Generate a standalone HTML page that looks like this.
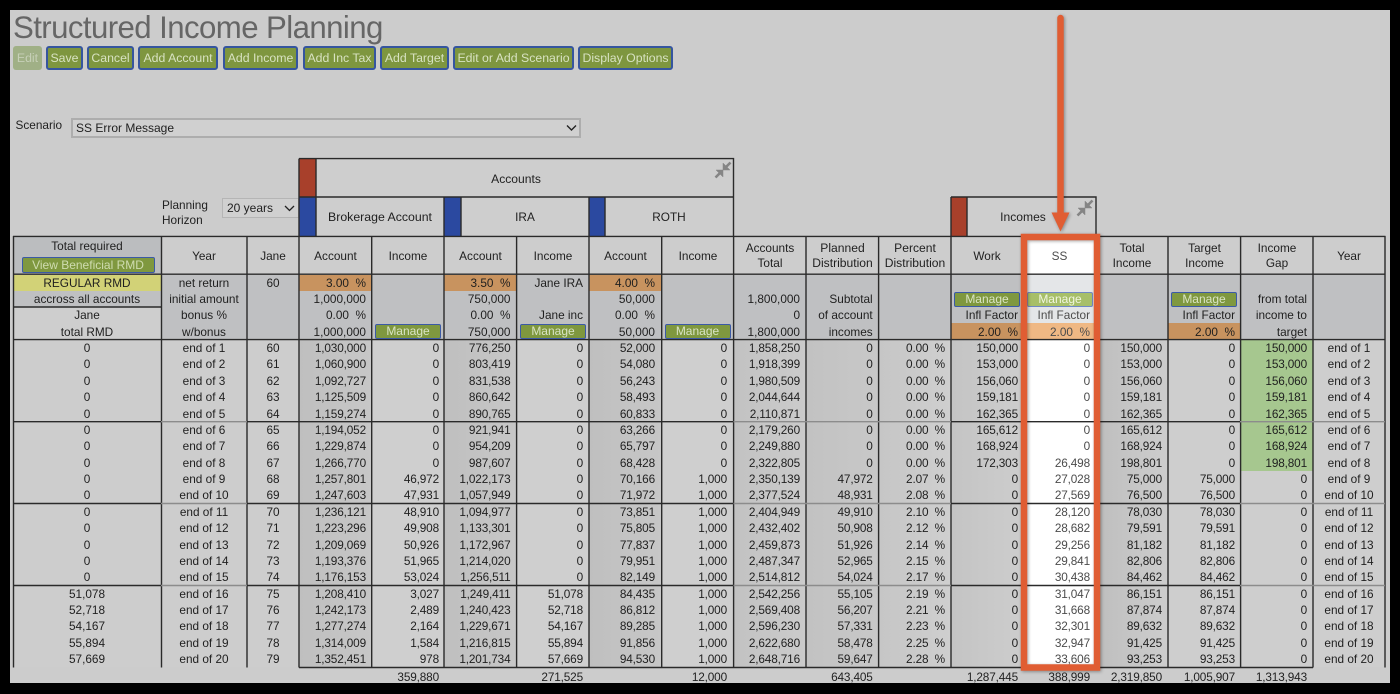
<!DOCTYPE html>
<html><head><meta charset="utf-8"><title>Structured Income Planning</title>
<style>
html,body{margin:0;padding:0;background:#000;}
#p{position:relative;width:1400px;height:694px;overflow:hidden;background:#000;font-family:"Liberation Sans",sans-serif;font-size:11.8px;color:#1f1f1f;}
#g{position:absolute;left:10px;top:10px;width:1379.5px;height:673px;background:#cccccc;}
#p div{position:absolute;}
.b{background:#7e963f;border:2px solid #35559f;border-radius:3px;box-sizing:border-box;height:24px;top:46px;color:#d8e2c2;font-size:12.3px;line-height:20px;text-align:center;white-space:nowrap;}
.m{background:#7f983f;border:1.5px solid #3b5aa6;border-radius:2px;box-sizing:border-box;height:15px;color:#d9e4c4;font-size:12px;line-height:13px;text-align:center;white-space:nowrap;}
.l{white-space:pre;line-height:16.37px;text-align:right;}
.h{white-space:pre;line-height:16.37px;text-align:center;}
.r{top:340px;}.s{top:274.5px;}
.l.r,.u{letter-spacing:-.15px;}
.c1{left:299px;width:67px}.c2{left:372px;width:67px}.c3{left:444px;width:66.5px}.c4{left:517px;width:66px}.c5{left:589px;width:66px}.c6{left:662px;width:65px}.c7{left:734px;width:66px}.c8{left:806px;width:66.7px}.c9{left:879px;width:66px}.c10{left:951px;width:67px}.c11{left:1027px;width:63px;color:#4c4c4c}.c12{left:1096px;width:66px}.c13{left:1168px;width:67px}.c14{left:1241px;width:66px}
.y{left:161px;width:86px}.j{left:247px;width:52px}.q{left:13px;width:148px}.y2{left:1313px;width:72px}
.u{top:668.5px;line-height:16px;white-space:nowrap;text-align:right;}
</style></head><body>
<div id="p">
<div id="g"></div>

<!-- title + toolbar -->
<div style="left:13px;top:9px;font-size:31.2px;letter-spacing:-.58px;line-height:38px;color:#666;white-space:nowrap;">Structured Income Planning</div>
<div class="b" style="left:13px;width:29px;background:#a0b086;border:0;border-radius:3px;color:#c7d0b8;line-height:24px;">Edit</div>
<div class="b" style="left:46px;width:37px;">Save</div>
<div class="b" style="left:87px;width:47px;">Cancel</div>
<div class="b" style="left:138px;width:80px;">Add Account</div>
<div class="b" style="left:223px;width:75px;">Add Income</div>
<div class="b" style="left:303px;width:73px;">Add Inc Tax</div>
<div class="b" style="left:380px;width:69px;">Add Target</div>
<div class="b" style="left:453px;width:121px;">Edit or Add Scenario</div>
<div class="b" style="left:578px;width:95px;">Display Options</div>

<!-- scenario -->
<div style="left:15.5px;top:117px;line-height:16px;">Scenario</div>
<div style="left:71px;top:118px;width:510px;height:20px;box-sizing:border-box;border:2px solid #adadad;background:#d0d0d0;"></div>
<div style="left:76px;top:120px;line-height:16px;font-size:12px;">SS Error Message</div>
<svg style="position:absolute;left:566px;top:124px" width="12" height="8"><path d="M1 1.5L5.5 6L10 1.5" fill="none" stroke="#222" stroke-width="1.4"/></svg>

<!-- planning horizon -->
<div style="left:162px;top:198px;line-height:14.5px;">Planning<br>Horizon</div>
<div style="left:222px;top:198px;width:77px;height:20px;box-sizing:border-box;border:1px solid #b5b5b5;background:#d0d0d0;"></div>
<div style="left:227px;top:200px;line-height:16px;font-size:12px;">20 years</div>
<svg style="position:absolute;left:284px;top:205px" width="12" height="8"><path d="M1 1L5.5 5.5L10 1" fill="none" stroke="#222" stroke-width="1.3"/></svg>

<!-- column header blocks -->
<div style="left:316px;top:159px;width:417px;height:38px;background:#cecece;"></div>
<div style="left:316px;top:197px;width:417px;height:39px;background:#cecece;"></div>
<div style="left:967px;top:197px;width:129px;height:39px;background:#cecece;"></div>
<div style="left:299px;top:159px;width:17px;height:38px;background:#a8402b;"></div>
<div style="left:299px;top:197px;width:17px;height:39px;background:#2b49a0;"></div>
<div style="left:444px;top:197px;width:17px;height:39px;background:#2b49a0;"></div>
<div style="left:589px;top:197px;width:16px;height:39px;background:#2b49a0;"></div>
<div style="left:951px;top:197px;width:16px;height:39px;background:#a8402b;"></div>
<div class="h" style="left:316px;width:400px;top:171px;font-size:12.1px;">Accounts</div>
<div class="h" style="left:316px;width:128px;top:209px;font-size:12.3px;">Brokerage Account</div>
<div class="h" style="left:461px;width:128px;top:209px;">IRA</div>
<div class="h" style="left:605px;width:128px;top:209px;">ROTH</div>
<div class="h" style="left:967px;width:112px;top:209px;font-size:12.1px;">Incomes</div>

<!-- table header backgrounds -->
<div style="left:13px;top:236px;width:148px;height:38px;background:#bbbdbf;"></div>
<div style="left:161px;top:236px;width:1224px;height:38px;background:#cdcdcd;"></div>
<div style="left:13px;top:274.5px;width:148px;height:16px;background:#d2d277;"></div>
<div style="left:13px;top:290.5px;width:148px;height:17px;background:#bfc0c2;"></div>
<div style="left:13px;top:307px;width:148px;height:32px;background:#cecece;"></div>
<div style="left:161px;top:274.5px;width:1224px;height:65px;background:#bfc0c2;"></div>
<div style="left:299px;top:275px;width:73px;height:16px;background:#c8935f;"></div>
<div style="left:444px;top:275px;width:73px;height:16px;background:#c8935f;"></div>
<div style="left:589px;top:275px;width:73px;height:16px;background:#c8935f;"></div>
<div style="left:951px;top:323px;width:70px;height:16px;background:#c8935f;"></div>
<div style="left:1168px;top:323px;width:73px;height:16px;background:#c8935f;"></div>

<!-- body shading -->
<div style="left:13px;top:340px;width:286px;height:327px;background:#cdcdcd;"></div>
<div style="left:299px;top:340px;width:73px;height:327px;background:linear-gradient(to right,#bfbfbf,#c7c7c7);"></div>
<div style="left:372px;top:340px;width:72px;height:327px;background:#cfcfcf;"></div>
<div style="left:444px;top:340px;width:73px;height:327px;background:linear-gradient(to right,#bfbfbf,#c7c7c7);"></div>
<div style="left:517px;top:340px;width:72px;height:327px;background:#cfcfcf;"></div>
<div style="left:589px;top:340px;width:73px;height:327px;background:linear-gradient(to right,#bfbfbf,#c7c7c7);"></div>
<div style="left:662px;top:340px;width:72px;height:327px;background:#cfcfcf;"></div>
<div style="left:734px;top:340px;width:72px;height:327px;background:linear-gradient(to right,#c2c2c2,#cbcbcb);"></div>
<div style="left:806px;top:340px;width:73px;height:327px;background:linear-gradient(to right,#c2c2c2,#c8c8c8);"></div>
<div style="left:879px;top:340px;width:72px;height:327px;background:linear-gradient(to right,#c6c6c6,#cfcfcf);"></div>
<div style="left:951px;top:340px;width:72px;height:327px;background:linear-gradient(to right,#c4c4c4,#cdcdcd);"></div>
<div style="left:1096px;top:340px;width:72px;height:327px;background:linear-gradient(to right,#bebebe,#cdcdcd);"></div>
<div style="left:1168px;top:340px;width:145px;height:327px;background:#cecece;"></div>
<div style="left:1241px;top:340px;width:72px;height:131px;background:#a6c78f;"></div>
<div style="left:1313px;top:340px;width:72px;height:327px;background:#cecece;"></div>

<!-- SS column -->
<div style="left:1023px;top:236px;width:73px;height:431px;background:#fff;"></div>
<div style="left:1023px;top:275px;width:73px;height:48px;background:#e4e6e8;"></div>
<div style="left:1023px;top:323px;width:73px;height:16px;background:#efb884;"></div>

<!-- grid lines -->
<svg style="position:absolute;left:0;top:0" width="1400" height="694">
<g stroke="#2a2a2a" stroke-width="1.4" fill="none">
<path d="M299 158.6H733.5V236M299 158.6V236M299 197H733.5M316 158.6V236M444 197V236M461 197V236M589 197V236M605 197V236"/>
<path d="M951 197H1096V236M951 197V236M967 197V236"/>
<path d="M13 236.4H1385.5M13 274.2H1385.5M13 339.6H1385.5M13 307H161"/>
<path d="M13.5 236V667.5M161.5 236V667.5M247 236V667.5M299 236V667.5M371.7 236V667.5M444 236V667.5M516.6 236V667.5M589 236V667.5M661.7 236V667.5M733.6 236V667.5M806 236V667.5M878.6 236V667.5M951 236V667.5M1023 236V667.5M1096 236V667.5M1168 236V667.5M1240.6 236V667.5M1313 236V667.5M1385 236V667.5"/>
<path d="M299 667.5H1313"/>
<path d="M13 421.7H161M247 421.7H733.5M951 421.7H1240M13 503.5H161M247 503.5H733.5M951 503.5H1240M13 585.5H161M247 585.5H733.5M951 585.5H1240"/>
</g>
<path d="M161 421.7H247M733.5 421.7H951M1240 421.7H1385M161 503.5H247M733.5 503.5H951M1240 503.5H1385M161 585.5H247M733.5 585.5H951M1240 585.5H1385" stroke="#8c8c8c" stroke-width="1.4" fill="none"/>
<g fill="#858585" stroke="#858585">
<path d="M715.5 177.5L721 172M730.5 162.5L725 168" stroke-width="2.6" fill="none"/>
<path d="M723 170L716 170L723 177ZM723 170L730 170L723 163Z" stroke-width=".5"/>
<path d="M1077.5 215.5L1083 210M1092.5 200.5L1087 206" stroke-width="2.6" fill="none"/>
<path d="M1085 208L1078 208L1085 215ZM1085 208L1092 208L1085 201Z" stroke-width=".5"/>
</g>
</svg>

<!-- headers -->
<div class="h q" style="top:238px;">Total required</div>
<div class="m" style="left:21.5px;top:257px;width:133px;height:16px;color:#cfdcb0;line-height:14px;">View Beneficial RMD</div>
<div class="h y" style="top:247.5px;">Year</div>
<div class="h j" style="top:247.5px;">Jane</div>
<div class="h" style="left:299px;width:73px;top:247.5px;">Account</div>
<div class="h" style="left:372px;width:72px;top:247.5px;">Income</div>
<div class="h" style="left:444px;width:73px;top:247.5px;">Account</div>
<div class="h" style="left:517px;width:72px;top:247.5px;">Income</div>
<div class="h" style="left:589px;width:73px;top:247.5px;">Account</div>
<div class="h" style="left:662px;width:72px;top:247.5px;">Income</div>
<div class="h" style="left:734px;width:72px;top:241px;line-height:14.6px;">Accounts
Total</div>
<div class="h" style="left:806px;width:73px;top:241px;line-height:14.6px;font-size:12.1px;">Planned
Distribution</div>
<div class="h" style="left:879px;width:72px;top:241px;line-height:14.6px;font-size:12.1px;">Percent
Distribution</div>
<div class="h" style="left:951px;width:72px;top:247.5px;">Work</div>
<div class="h" style="left:1023px;width:73px;top:247.5px;color:#4c4c4c;">SS</div>
<div class="h" style="left:1096px;width:72px;top:241px;line-height:14.6px;">Total
Income</div>
<div class="h" style="left:1168px;width:73px;top:241px;line-height:14.6px;">Target
Income</div>
<div class="h" style="left:1241px;width:72px;top:241px;line-height:14.6px;">Income
Gap</div>
<div class="h y2" style="top:247.5px;">Year</div>

<!-- setup rows -->
<div class="h q s">REGULAR RMD
accross all accounts
Jane
total RMD</div>
<div class="h y s">net return
initial amount
bonus %
w/bonus</div>
<div class="h j s">60</div>
<div class="l c1 s">3.00  %
1,000,000
0.00  %
1,000,000</div>
<div class="l c3 s">3.50  %
750,000
0.00  %
750,000</div>
<div class="l c4 s">Jane IRA

Jane inc</div>
<div class="l c5 s">4.00  %
50,000
0.00  %
50,000</div>
<div class="l c7 s">
1,800,000
0
1,800,000</div>
<div class="l c8 s">
Subtotal
of account
incomes</div>
<div class="l c10 s">

Infl Factor
2.00  %</div>
<div class="l c11 s">

Infl Factor
2.00  %</div>
<div class="l c13 s">

Infl Factor
2.00  %</div>
<div class="l c14 s">
from total
income to
target</div>
<div class="m" style="left:375px;top:324px;width:66px;">Manage</div>
<div class="m" style="left:520px;top:324px;width:66px;">Manage</div>
<div class="m" style="left:664.5px;top:324px;width:66px;">Manage</div>
<div class="m" style="left:954px;top:292px;width:66px;">Manage</div>
<div class="m" style="left:1027px;top:292px;width:66px;background:#a7bf69;border-color:#7088c6;color:#f0f5df;">Manage</div>
<div class="m" style="left:1171px;top:292px;width:66px;">Manage</div>

<!-- data -->
<div class="h q r">0
0
0
0
0
0
0
0
0
0
0
0
0
0
0
51,078
52,718
54,167
55,894
57,669</div>
<div class="h y r">end of 1
end of 2
end of 3
end of 4
end of 5
end of 6
end of 7
end of 8
end of 9
end of 10
end of 11
end of 12
end of 13
end of 14
end of 15
end of 16
end of 17
end of 18
end of 19
end of 20</div>
<div class="h j r">60
61
62
63
64
65
66
67
68
69
70
71
72
73
74
75
76
77
78
79</div>
<div class="l c1 r">1,030,000
1,060,900
1,092,727
1,125,509
1,159,274
1,194,052
1,229,874
1,266,770
1,257,801
1,247,603
1,236,121
1,223,296
1,209,069
1,193,376
1,176,153
1,208,410
1,242,173
1,277,274
1,314,009
1,352,451</div>
<div class="l c2 r">0
0
0
0
0
0
0
0
46,972
47,931
48,910
49,908
50,926
51,965
53,024
3,027
2,489
2,164
1,584
978</div>
<div class="l c3 r">776,250
803,419
831,538
860,642
890,765
921,941
954,209
987,607
1,022,173
1,057,949
1,094,977
1,133,301
1,172,967
1,214,020
1,256,511
1,249,411
1,240,423
1,229,671
1,216,815
1,201,734</div>
<div class="l c4 r">0
0
0
0
0
0
0
0
0
0
0
0
0
0
0
51,078
52,718
54,167
55,894
57,669</div>
<div class="l c5 r">52,000
54,080
56,243
58,493
60,833
63,266
65,797
68,428
70,166
71,972
73,851
75,805
77,837
79,951
82,149
84,435
86,812
89,285
91,856
94,530</div>
<div class="l c6 r">0
0
0
0
0
0
0
0
1,000
1,000
1,000
1,000
1,000
1,000
1,000
1,000
1,000
1,000
1,000
1,000</div>
<div class="l c7 r">1,858,250
1,918,399
1,980,509
2,044,644
2,110,871
2,179,260
2,249,880
2,322,805
2,350,139
2,377,524
2,404,949
2,432,402
2,459,873
2,487,347
2,514,812
2,542,256
2,569,408
2,596,230
2,622,680
2,648,716</div>
<div class="l c8 r">0
0
0
0
0
0
0
0
47,972
48,931
49,910
50,908
51,926
52,965
54,024
55,105
56,207
57,331
58,478
59,647</div>
<div class="l c9 r">0.00  %
0.00  %
0.00  %
0.00  %
0.00  %
0.00  %
0.00  %
0.00  %
2.07  %
2.08  %
2.10  %
2.12  %
2.14  %
2.15  %
2.17  %
2.19  %
2.21  %
2.23  %
2.25  %
2.28  %</div>
<div class="l c10 r">150,000
153,000
156,060
159,181
162,365
165,612
168,924
172,303
0
0
0
0
0
0
0
0
0
0
0
0</div>
<div class="l c11 r">0
0
0
0
0
0
0
26,498
27,028
27,569
28,120
28,682
29,256
29,841
30,438
31,047
31,668
32,301
32,947
33,606</div>
<div class="l c12 r">150,000
153,000
156,060
159,181
162,365
165,612
168,924
198,801
75,000
76,500
78,030
79,591
81,182
82,806
84,462
86,151
87,874
89,632
91,425
93,253</div>
<div class="l c13 r">0
0
0
0
0
0
0
0
75,000
76,500
78,030
79,591
81,182
82,806
84,462
86,151
87,874
89,632
91,425
93,253</div>
<div class="l c14 r">150,000
153,000
156,060
159,181
162,365
165,612
168,924
198,801
0
0
0
0
0
0
0
0
0
0
0
0</div>
<div class="h y2 r">end of 1
end of 2
end of 3
end of 4
end of 5
end of 6
end of 7
end of 8
end of 9
end of 10
end of 11
end of 12
end of 13
end of 14
end of 15
end of 16
end of 17
end of 18
end of 19
end of 20</div>

<!-- totals -->
<div class="u c2">359,880</div>
<div class="u c4">271,525</div>
<div class="u c6">12,000</div>
<div class="u c8">643,405</div>
<div class="u c10">1,287,445</div>
<div class="u c11" style="color:#1f1f1f">388,999</div>
<div class="u c12">2,319,850</div>
<div class="u c13">1,005,907</div>
<div class="u c14">1,313,943</div>

<!-- annotation -->
<svg style="position:absolute;left:0;top:0;filter:drop-shadow(1px 1px 1.5px rgba(0,0,0,.35))" width="1400" height="694">
<path d="M1060.5 18V214" stroke="#e05d33" stroke-width="6.5" stroke-linecap="round" fill="none"/>
<path d="M1051.5 212.5H1069.5L1060.5 231.5Z" fill="#e05d33"/>
<rect x="1024" y="237" width="73" height="430.5" fill="none" stroke="#e05d33" stroke-width="6.5"/>
</svg>
</div>
</body></html>
